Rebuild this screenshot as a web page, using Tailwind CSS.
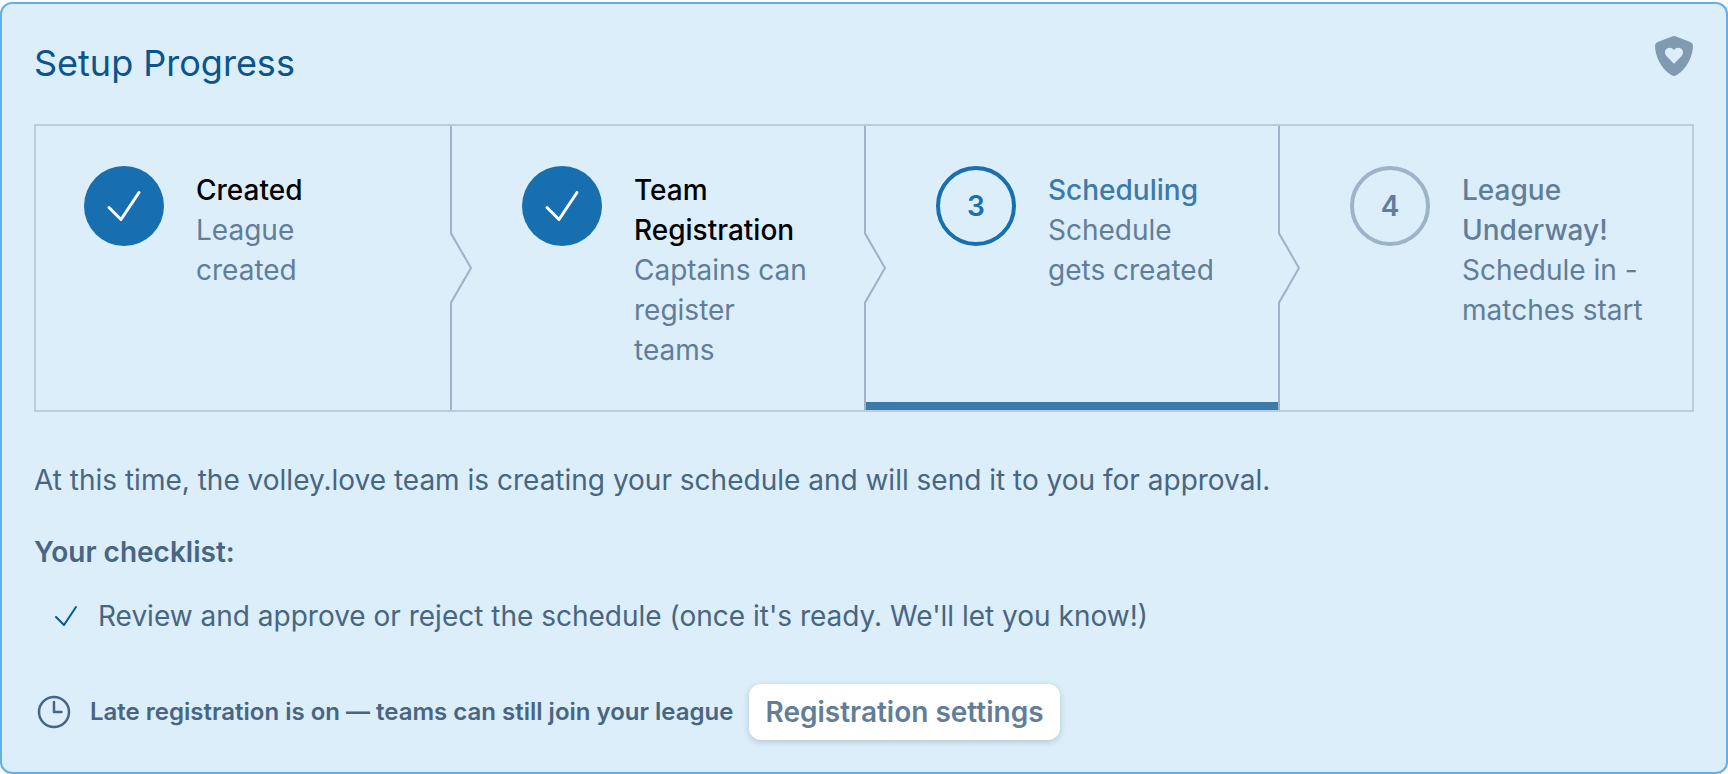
<!DOCTYPE html>
<html lang="en">
<head>
<meta charset="utf-8">
<meta name="viewport" content="width=device-width, initial-scale=1">
<title>Setup Progress</title>
<script src="https://cdn.jsdelivr.net/npm/@tailwindcss/browser@4"></script>
</head>
<body class="bg-[#fafcfe] pt-0.5 font-['Inter',sans-serif] text-[28px] leading-10 text-[#486581]">
<main class="rounded-xl border-2 border-[#62b0e8] bg-[#dbeefa] p-8">
  <header class="mb-8 flex h-14 items-start justify-between">
    <h1 class="text-4xl leading-[54px] font-normal text-[#0a558c]">Setup Progress</h1>
    <svg class="h-10 w-10" viewBox="-1 0 40 40" fill="#829ab1" role="img" aria-label="Verified league">
      <path fill-rule="evenodd" d="M17.6.3Q19-.3 20.4.3L35.8 6.200Q38 7.200 38 9.800C38 19 32.500 33 21.400 39.300Q19 40.500 16.600 39.300C5.500 33 0 19 0 9.800Q0 7.200 2.200 6.200ZM19 27.800L11.600 20.200C9.400 17.900 9.500 14.600 11.500 12.900C13.700 11.200 16.900 11.500 19 14C21.100 11.500 24.300 11.200 26.500 12.900C28.500 14.600 28.600 17.900 26.400 20.200Z"/>
    </svg>
  </header>

  <nav aria-label="Progress">
    <ol class="grid grid-cols-4 border-2 border-[#bcccdc]">
      <li class="flex items-start gap-8 px-12 py-10">
        <span class="flex size-20 shrink-0 items-center justify-center rounded-full bg-[#186faf]">
          <svg class="size-12" viewBox="0 0 24 24" fill="none" stroke="#fff" stroke-width="1.5" stroke-linecap="round" stroke-linejoin="round" aria-hidden="true"><path d="M4.500 12.750l6 6 9-13.500"/></svg>
        </span>
        <div class="mt-1">
          <h2 class="font-medium text-black">Created</h2>
          <p class="text-[#627d98]">League created</p>
        </div>
      </li>
      <li class="relative flex items-start gap-8 py-10 pr-12 pl-18">
        <svg class="absolute top-0 left-0 h-full w-6 text-[#9fb3c8]" viewBox="0 0 12 82" fill="none" preserveAspectRatio="none" aria-hidden="true"><path d="M0.500 0V31L10.500 41L0.500 51V82" stroke="currentColor" stroke-width="2" vector-effect="non-scaling-stroke"/></svg>
        <span class="flex size-20 shrink-0 items-center justify-center rounded-full bg-[#186faf]">
          <svg class="size-12" viewBox="0 0 24 24" fill="none" stroke="#fff" stroke-width="1.5" stroke-linecap="round" stroke-linejoin="round" aria-hidden="true"><path d="M4.500 12.750l6 6 9-13.500"/></svg>
        </span>
        <div class="mt-1">
          <h2 class="font-medium text-black">Team Registration</h2>
          <p class="text-[#627d98]">Captains can register teams</p>
        </div>
      </li>
      <li class="relative flex items-start gap-8 py-10 pr-12 pl-18" aria-current="step">
        <span class="absolute inset-x-0 bottom-0 h-2 bg-[#3d7aaa]"></span>
        <svg class="absolute top-0 left-0 h-full w-6 text-[#9fb3c8]" viewBox="0 0 12 82" fill="none" preserveAspectRatio="none" aria-hidden="true"><path d="M0.500 0V31L10.500 41L0.500 51V82" stroke="currentColor" stroke-width="2" vector-effect="non-scaling-stroke"/></svg>
        <span class="flex size-20 shrink-0 items-center justify-center rounded-full border-4 border-[#186faf] font-semibold text-[#186faf]">3</span>
        <div class="mt-1">
          <h2 class="font-medium text-[#3d7aaa]">Scheduling</h2>
          <p class="text-[#627d98]">Schedule gets created</p>
        </div>
      </li>
      <li class="relative flex items-start gap-8 py-10 pr-12 pl-18">
        <svg class="absolute top-0 left-0 h-full w-6 text-[#9fb3c8]" viewBox="0 0 12 82" fill="none" preserveAspectRatio="none" aria-hidden="true"><path d="M0.500 0V31L10.500 41L0.500 51V82" stroke="currentColor" stroke-width="2" vector-effect="non-scaling-stroke"/></svg>
        <span class="flex size-20 shrink-0 items-center justify-center rounded-full border-4 border-[#9fb3c8] font-semibold text-[#627d98]">4</span>
        <div class="mt-1">
          <h2 class="font-medium text-[#627d98]">League Underway!</h2>
          <p class="text-[#627d98]">Schedule in - matches start</p>
        </div>
      </li>
    </ol>
  </nav>

  <p class="mt-12">At this time, the volley.love team is creating your schedule and will send it to you for approval.</p>
  <h2 class="mt-8 font-semibold">Your checklist:</h2>
  <ul class="mt-6 pl-4">
    <li class="flex items-center gap-4">
      <svg class="size-8 shrink-0" viewBox="0 0 24 24" fill="none" stroke="#0a558c" stroke-width="1.5" stroke-linecap="round" stroke-linejoin="round" aria-hidden="true"><path d="M4.500 12.750l6 6 9-13.500"/></svg>
      <span>Review and approve or reject the schedule (once it's ready. We'll let you know!)</span>
    </li>
  </ul>
  <div class="mt-12 flex items-center gap-4">
    <svg class="size-10 shrink-0" viewBox="0 0 24 24" fill="none" stroke="currentColor" stroke-width="1.5" stroke-linecap="round" stroke-linejoin="round" aria-hidden="true"><path d="M12 6v6h4.500m4.500 0a9 9 0 1 1-18 0 9 9 0 0 1 18 0z"/></svg>
    <p class="text-2xl leading-8 font-semibold">Late registration is on — teams can still join your league</p>
    <button type="button" class="rounded-xl bg-white px-4 py-2 font-semibold text-[#627d98] shadow-[0_2px_6px_rgba(16,42,67,0.2)]">Registration settings</button>
  </div>
</main>
</body>
</html>
